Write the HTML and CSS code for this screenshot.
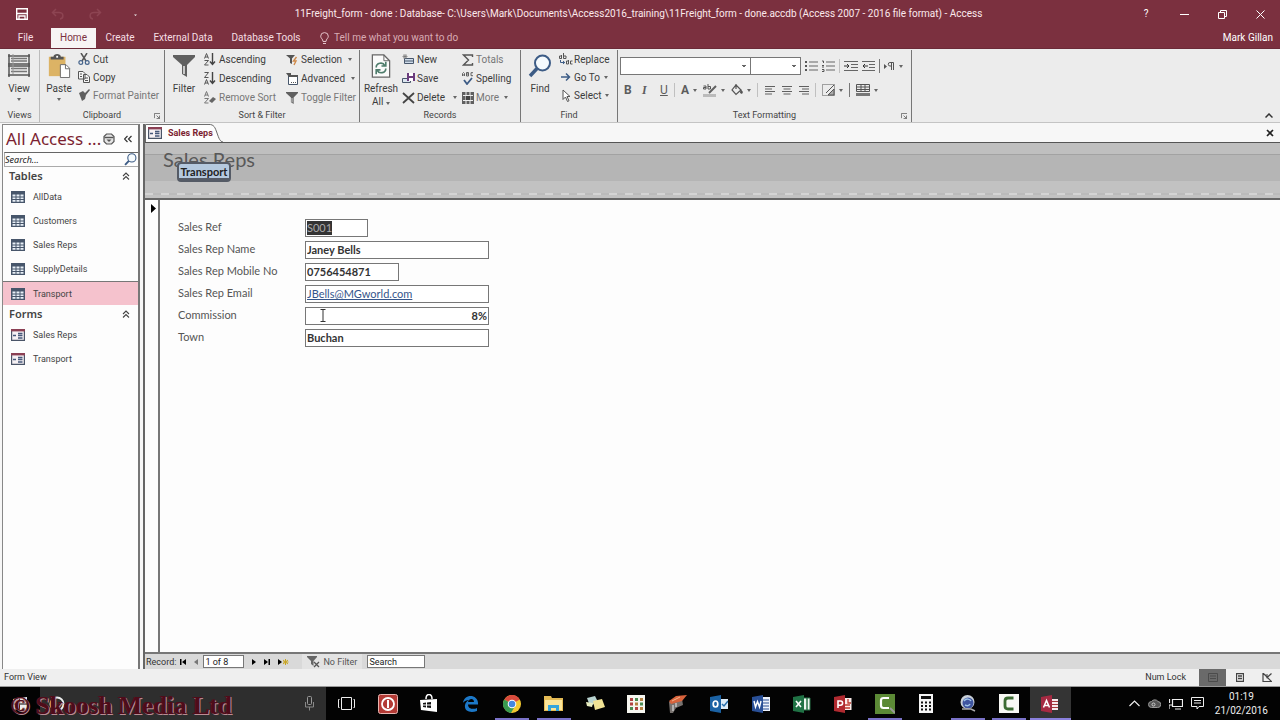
FILE: index.html
```html
<!DOCTYPE html>
<html lang="en">
<head>
<meta charset="utf-8">
<title>11Freight_form - Access</title>
<link rel="stylesheet" href="styles.css">
</head>
<body>
<svg class="defs" aria-hidden="true">
  <symbol id="table" viewBox="0 0 14 12"><path d="M0 0h14v12H0z" fill="#47566b"/><path d="M1.500 3.500h3v2h-3zM5.500 3.500h3v2h-3zM9.500 3.500h3v2h-3zM1.500 6.500h3v1.500h-3zM5.500 6.500h3v1.500h-3zM9.500 6.500h3v1.500h-3zM1.500 9h3v1.700h-3zM5.500 9h3v1.700h-3zM9.500 9h3v1.700h-3z" fill="#e8eff7"/></symbol>
  <symbol id="form" viewBox="0 0 14 12"><path d="M.6.600h12.800v10.800H.6z" fill="#f6f1f4" stroke="#4a5568" stroke-width="1.200"/><path d="M0 0h14v2.400H0z" fill="#8b4054"/><path d="M2 6.500h3M7 4.500h4.500M7 6.500h4.500M7 9h4.500" stroke="#46587a" stroke-width="1.300"/></symbol>
  <symbol id="chev" viewBox="0 0 8 8"><path d="M1 4l3-3 3 3M1 7.500l3-3 3 3" fill="none" stroke="#444" stroke-width="1.100"/></symbol>
  <symbol id="lens" viewBox="0 0 24 24"><circle cx="14.500" cy="9" r="7.500" fill="#f5fafd" stroke="#3d5c86" stroke-width="2"/><path d="M9 14.500L2 22" stroke="#3d5c86" stroke-width="3.500"/></symbol>
  <symbol id="funnel" viewBox="0 0 22 22"><path d="M0 0h22v2l-8 8v12l-5-3v-9L0 2z" fill="#606060"/><path d="M11 11v8" stroke="#eee" stroke-width="1.500"/></symbol>
  <symbol id="left" viewBox="0 0 12 10"><path d="M1 1.500h10M1 4h7M1 6.500h10M1 9h7" stroke="#606060"/></symbol>
  <symbol id="mid" viewBox="0 0 12 10"><path d="M1 1.500h10M2.500 4h7M1 6.500h10M2.500 9h7" stroke="#606060"/></symbol>
  <symbol id="right" viewBox="0 0 12 10"><path d="M1 1.500h10M4 4h7M1 6.500h10M4 9h7" stroke="#606060"/></symbol>
  <symbol id="launch" viewBox="0 0 7 7"><path d="M.5 6V.500H7M3 3l3.500 3.500M6.500 3v3.500H3" fill="none" stroke="#666"/></symbol>
</svg>

<header class="top">
  <div class="titlebar">
    <div class="quick">
      <button class="plain" aria-label="Save"><svg width="12" height="12" viewBox="0 0 12 12"><path d="M.7.700h10.600v10.600H.7z" fill="none" stroke="#fff" stroke-width="1.400"/><path d="M1 5.500h10M3 11V8h6v3" stroke="#fff" fill="none" stroke-width="1.300"/></svg></button>
      <button class="plain" aria-label="Undo"><svg width="14" height="12" viewBox="0 0 14 12"><path d="M5 1L1.500 4.500 5 8M2 4.500h6c5 0 5 6 1 6.500" fill="none" stroke="#8d4452" stroke-width="1.500"/></svg></button>
      <button class="plain" aria-label="Redo"><svg width="14" height="12" viewBox="0 0 14 12"><path d="M9 1l3.500 3.500L9 8M12 4.500H6c-5 0-5 6-1 6.500" fill="none" stroke="#8d4452" stroke-width="1.500"/></svg></button>
      <button class="plain more" aria-label="Customize"><svg width="5" height="5" viewBox="0 0 5 5"><path d="M1 .500h3M1 2.500h3L2.500 4z" fill="#eee"/></svg></button>
    </div>
    <h1 class="doc">11Freight_form - done : Database- C:\Users\Mark\Documents\Access2016_training\11Freight_form - done.accdb (Access 2007 - 2016 file format) - Access</h1>
    <div class="winbtns">
      <button class="plain" aria-label="Help">?</button>
      <button class="plain" aria-label="Minimize"><svg width="9" height="9" viewBox="0 0 9 9"><path d="M0 4.500h9" stroke="#fff"/></svg></button>
      <button class="plain" aria-label="Restore"><svg width="9" height="9" viewBox="0 0 9 9"><path d="M.5 2.500h6v6h-6zM2.500 2V.500h6v6H7" fill="none" stroke="#fff"/></svg></button>
      <button class="plain" aria-label="Close"><svg width="9" height="9" viewBox="0 0 9 9"><path d="M.5.500l8 8M8.500.500l-8 8" stroke="#fff"/></svg></button>
    </div>
  </div>
  <nav class="tabs">
    <button class="tab file">File</button>
    <button class="tab active">Home</button>
    <button class="tab create">Create</button>
    <button class="tab ext">External Data</button>
    <button class="tab db">Database Tools</button>
    <button class="tab tell"><svg width="9" height="13" viewBox="0 0 9 13"><path d="M3 9.500C3 7 .7 6.500.7 4.200a3.800 3.600 0 0 1 7.600 0C8.300 6.500 6 7 6 9.500zM3 11.500h3" fill="none" stroke="#e5c3ca"/></svg>Tell me what you want to do</button>
    <span class="user">Mark Gillan</span>
  </nav>
</header>

<section class="ribbon" aria-label="Ribbon">
  <div class="group views">
    <div class="gbody">
      <button class="big"><svg width="22" height="24" viewBox="0 0 22 24"><path d="M1 0v23M21 0v23M0 2h22M0 10h22M0 12h22M0 21h22" stroke="#555" stroke-width="1.500"/><path d="M3 4.500h16M3 7h16M3 14.500h16M3 17.500h16" stroke="#777" stroke-width="1.500"/><path d="M5 0v20" stroke="#999"/></svg><span>View</span><i class="caret"></i></button>
    </div>
    <div class="glabel">Views</div>
  </div>
  <div class="group clip">
    <div class="gbody">
      <button class="big"><svg width="24" height="26" viewBox="0 0 24 26"><path d="M1 3h18v21H1z" fill="#dcb365"/><path d="M3 6V3h3c0-4 8-4 8 0h3v3z" fill="#555"/><path d="M9 2h2v2H9z" fill="#fff"/><path d="M13.500 11.500h6l4 4v10h-10z" fill="#fff" stroke="#666"/><path d="M19 11.500v4.500h4.500" fill="none" stroke="#666"/></svg><span>Paste</span><i class="caret"></i></button>
      <div class="col">
        <button class="cmd"><svg width="12" height="12" viewBox="0 0 12 12"><path d="M3 0l5 8M9 0L4 8" stroke="#555" stroke-width="1.500"/><circle cx="2.800" cy="9.500" r="1.900" fill="none" stroke="#46648c" stroke-width="1.200"/><circle cx="9.200" cy="9.500" r="1.900" fill="none" stroke="#46648c" stroke-width="1.200"/></svg>Cut</button>
        <button class="cmd"><svg width="12" height="12" viewBox="0 0 12 12"><path d="M.5.500H5l2 2V8H.5zM5.500 3.500H9l2.500 2.500v5.500h-6z" fill="#f5f5f5" stroke="#555"/><path d="M2 3h2M2 5.500h2M7 7h3M7 9.500h3" stroke="#555"/></svg>Copy</button>
        <button class="cmd dim"><svg width="12" height="12" viewBox="0 0 12 12"><path d="M1 4l4-2 2 2 4-4 1 1-4 5-1 4-3 2z" fill="#606060"/></svg>Format Painter</button>
      </div>
    </div>
    <div class="glabel">Clipboard<button class="launch" aria-label="Clipboard options"><svg width="6" height="6"><use href="#launch"/></svg></button></div>
  </div>
  <div class="group sort">
    <div class="gbody">
      <button class="big"><svg width="22" height="24"><use href="#funnel"/></svg><span>Filter</span></button>
      <div class="col">
        <button class="cmd"><svg width="12" height="13" viewBox="0 0 12 13"><path d="M.5 5.500L2.500.500l2 5M1 4h3M.5 7.500h4l-4 4.500h4" fill="none" stroke="#555"/><path d="M8.500 0v11M6 8.500l2.500 3 2.500-3" fill="none" stroke="#444" stroke-width="1.400"/></svg>Ascending</button>
        <button class="cmd"><svg width="12" height="13" viewBox="0 0 12 13"><path d="M.5.500h4l-4 5h4M.5 12.500l2-5 2 5M1 11h3" fill="none" stroke="#555"/><path d="M8.500 0v11M6 8.500l2.500 3 2.500-3" fill="none" stroke="#444" stroke-width="1.400"/></svg>Descending</button>
        <button class="cmd dim"><svg width="12" height="13" viewBox="0 0 12 13"><path d="M.5 5.500L2.500.500l2 5M1 4h3M.5 7.500h4l-4 4.500h4" fill="none" stroke="#777"/><path d="M5 10l4-4 3 2-4 4z" fill="#666"/></svg>Remove Sort</button>
      </div>
      <div class="col second">
        <button class="cmd"><svg width="12" height="12" viewBox="0 0 12 12"><path d="M0 1h9L6 4.500V10L4 9V4.500z" fill="#555"/><path d="M10.500 3L7.500 7H10l-2 4" fill="none" stroke="#d08a4a" stroke-width="1.400"/></svg>Selection<i class="caret"></i></button>
        <button class="cmd"><svg width="12" height="12" viewBox="0 0 12 12"><path d="M2.500 2.500h9v9h-9z" fill="#fff" stroke="#47566b"/><path d="M0 0h5v2h7v2H3z" fill="#555"/><path d="M5 9.500h5" stroke="#555" stroke-dasharray="1 1"/></svg>Advanced<i class="caret"></i></button>
        <button class="cmd dim"><svg width="12" height="12" viewBox="0 0 22 22"><use href="#funnel"/></svg>Toggle Filter</button>
      </div>
    </div>
    <div class="glabel">Sort &amp; Filter</div>
  </div>
  <div class="group rec">
    <div class="gbody">
      <button class="big"><svg width="20" height="25" viewBox="0 0 20 25"><path d="M1 1h12l6 6v17H1z" fill="#fafafa" stroke="#666" stroke-width="1.300"/><path d="M13 1v6h6" fill="none" stroke="#666"/><path d="M5 14c0-5 7-6 9-2M15 8v4.500h-4.500M15 15c0 5-7 6-9 2M5 21v-4.500h4.500" fill="none" stroke="#4f7d6c" stroke-width="1.700"/></svg><span>Refresh<br>All <i class="caret"></i></span></button>
      <div class="col first">
        <button class="cmd"><svg width="13" height="12" viewBox="0 0 13 12"><path d="M2.500 4.500h9v5h-9z" fill="#cfdcea" stroke="#47566b"/><path d="M3 7h9" stroke="#47566b"/><path d="M3 0v5M.5 2.500h5M1 .700l4 3.600M5 .700L1 4.300" stroke="#777" stroke-width=".8"/></svg>New</button>
        <button class="cmd"><svg width="13" height="12" viewBox="0 0 13 12"><path d="M.5 5.500h8v4h-8z" fill="#dce6f0" stroke="#47566b"/><path d="M5 0h8v8H5z" fill="#6b3c7d"/><path d="M7 0h4v3H7zM7 5h4v3H7z" fill="#fff"/></svg>Save</button>
        <button class="cmd"><svg width="13" height="12" viewBox="0 0 13 12"><path d="M1 1l11 10M12 1L1 11" stroke="#444" stroke-width="1.800"/></svg>Delete<i class="caret wide"></i></button>
      </div>
      <div class="col third">
        <button class="cmd dim"><svg width="12" height="12" viewBox="0 0 12 12"><path d="M10.500 3V1H1.500l5 5-5 5h9V9" fill="none" stroke="#555" stroke-width="1.400"/></svg>Totals</button>
        <button class="cmd"><svg width="12" height="13" viewBox="0 0 12 13"><path d="M.5 4V1.500L1.500.500l1 1V4M.5 3h2M4.500.500v3.500h2v-3.500zM4.500 2h2M11 .700H9v3h2" fill="none" stroke="#555" stroke-width=".9"/><path d="M2 8l3 4 5-6" fill="none" stroke="#3d5c86" stroke-width="1.800"/></svg>Spelling</button>
        <button class="cmd dim"><svg width="12" height="12"><path d="M0 0h12v12H0z" fill="#606060"/><path d="M1 3.500h10M1 8.500h10M4 0v12M8 0v12" stroke="#eee"/><path d="M4 4h4v4H4z" fill="#444"/></svg>More<i class="caret"></i></button>
      </div>
    </div>
    <div class="glabel">Records</div>
  </div>
  <div class="group find">
    <div class="gbody">
      <button class="big"><svg width="24" height="24"><use href="#lens"/></svg><span>Find</span></button>
      <div class="col">
        <button class="cmd"><svg width="14" height="13" viewBox="0 0 14 13"><path d="M.5 3h2v2.500H.5zM2.500 2v3.500M4.500 0v5.500h2.500V3H4.500M7.500 8h2v3h-2zM9.500 7v4M13.500 8H11.500v3h2" fill="none" stroke="#555"/><path d="M1.500 7v2.500h4M4 8l1.700 1.500L4 11" fill="none" stroke="#3d5c86"/></svg>Replace</button>
        <button class="cmd"><svg width="14" height="10" viewBox="0 0 14 10"><path d="M2 5h8M7 1.500L10.500 5 7 8.500" fill="none" stroke="#3d5c86" stroke-width="1.500"/></svg>Go To<i class="caret"></i></button>
        <button class="cmd"><svg width="14" height="13" viewBox="0 0 14 13"><path d="M4 1v9.500l2.500-2.500 2 4.500 1.500-.7-2-4.300H11z" fill="#fff" stroke="#555"/></svg>Select<i class="caret"></i></button>
      </div>
    </div>
    <div class="glabel">Find</div>
  </div>
  <div class="group text">
    <div class="gbody fmt">
      <div class="frow">
        <select class="font" aria-label="Font"><option></option></select><select class="size" aria-label="Font size"><option></option></select>
        <button class="ib" aria-label="Bullets"><svg width="13" height="12" viewBox="0 0 13 12"><path d="M0 2h2M0 6h2M0 10h2" stroke="#555" stroke-width="2"/><path d="M4 2h9M4 6h9M4 10h9" stroke="#666"/></svg></button>
        <button class="ib" aria-label="Numbering"><svg width="13" height="12" viewBox="0 0 13 12"><path d="M0 1h1.500v2M0 5.500h2M0 7h2M0 9.500h2v2H0" stroke="#555" fill="none"/><path d="M4 2h9M4 6h9M4 10h9" stroke="#666"/></svg></button>
        <i class="sep"></i>
        <button class="ib" aria-label="Decrease indent"><svg width="14" height="10" viewBox="0 0 14 10"><path d="M0 .500h14M7 3.500h7M7 6.500h7M0 9.500h14" stroke="#666"/><path d="M0 5h5M3 3l2 2-2 2" stroke="#333" fill="none"/></svg></button>
        <button class="ib" aria-label="Increase indent"><svg width="13" height="10" viewBox="0 0 13 10"><path d="M0 .500h13M7 3.500h6M7 6.500h6M0 9.500h13" stroke="#666"/><path d="M1 5h5M3 3L1 5l2 2" stroke="#333" fill="none"/></svg></button>
        <i class="sep dark"></i>
        <button class="ib" aria-label="Direction"><svg width="11" height="9" viewBox="0 0 11 9"><path d="M0 2l3 2.500L0 7z" fill="#555"/><path d="M7.500 8V1M9.500 8V.500H6a1.500 1.500 0 0 0 0 3.500h1" fill="none" stroke="#555"/></svg><i class="caret"></i></button>
      </div>
      <div class="frow low">
        <button class="ib b">B</button><button class="ib it">I</button><button class="ib u">U</button>
        <i class="sep"></i>
        <button class="ib a">A<i class="caret"></i></button>
        <button class="ib" aria-label="Highlight"><svg width="14" height="13" viewBox="0 0 14 13"><path d="M.5 2h2.500v3H.5V3.500H3M5 0v5h2.500V2.500H5" fill="none" stroke="#555"/><path d="M13 2L6 9" stroke="#606060" stroke-width="2"/><path d="M0 10h13v3H0z" fill="#bbb"/></svg><i class="caret"></i></button>
        <button class="ib" aria-label="Fill"><svg width="12" height="12" viewBox="0 0 12 12"><path d="M5 1l5 5-5 4.500L1 6zM5 0v5" fill="none" stroke="#555" stroke-width="1.200"/><path d="M9.500 5l2.500 3-1 2-2-1z" fill="#555"/></svg><i class="caret"></i></button>
        <i class="sep"></i>
        <button class="ib al" aria-label="Align left"><svg width="12" height="10"><use href="#left"/></svg></button>
        <button class="ib al" aria-label="Center"><svg width="12" height="10"><use href="#mid"/></svg></button>
        <button class="ib al" aria-label="Align right"><svg width="12" height="10"><use href="#right"/></svg></button>
        <i class="sep"></i>
        <button class="ib" aria-label="Gridlines"><svg width="13" height="12" viewBox="0 0 13 12"><path d="M.5.500h12v11H.5z" fill="none" stroke="#555" stroke-dasharray="1 1"/><path d="M12 1L4 9M12 5v6H6z" stroke="#555" fill="#aaa"/></svg><i class="caret"></i></button>
        <i class="sep dark"></i>
        <button class="ib" aria-label="Alternate row color"><svg width="14" height="12" viewBox="0 0 14 12"><path d="M.5.500h13v7H.5zM0 3h14M0 5.500h14M5 0v8M9 0v8" fill="none" stroke="#555"/><path d="M0 9h14v3H0z" fill="#777"/></svg><i class="caret"></i></button>
      </div>
    </div>
    <div class="glabel">Text Formatting<button class="launch" aria-label="Text options"><svg width="6" height="6"><use href="#launch"/></svg></button></div>
  </div>
  <button class="collapse" aria-label="Collapse ribbon"><svg width="8" height="5" viewBox="0 0 8 5"><path d="M.5 4.500L4 1l3.500 3.500" fill="none" stroke="#333" stroke-width="1.500"/></svg></button>
</section>

<main class="work">
  <aside class="nav">
    <div class="navhead"><h2>All Access ...</h2>
      <button class="plain" aria-label="Object filter"><svg width="12" height="12" viewBox="0 0 12 12"><path d="M3.500 1h5L11 3.500v5L8.500 11h-5L1 8.500v-5z" fill="#e4e4e4" stroke="#555" stroke-width="1.200"/><path d="M1.500 4.500h9" stroke="#555" stroke-width="1.400"/><path d="M3.500 6.500h5L6 9z" fill="#555"/></svg></button>
      <button class="plain" aria-label="Collapse pane"><svg width="8" height="8" viewBox="0 0 8 8"><path d="M3.500 1l-3 3 3 3M7.500 1l-3 3 3 3" fill="none" stroke="#333" stroke-width="1.200"/></svg></button>
    </div>
    <div class="navsearch"><input type="text" placeholder="Search..." aria-label="Search objects"><svg width="13" height="13"><use href="#lens"/></svg></div>
    <h3>Tables<svg width="8" height="8"><use href="#chev"/></svg></h3>
    <ul>
      <li><svg width="14" height="12"><use href="#table"/></svg>AllData</li>
      <li><svg width="14" height="12"><use href="#table"/></svg>Customers</li>
      <li><svg width="14" height="12"><use href="#table"/></svg>Sales Reps</li>
      <li><svg width="14" height="12"><use href="#table"/></svg>SupplyDetails</li>
      <li class="sel"><svg width="14" height="12"><use href="#table"/></svg>Transport</li>
    </ul>
    <h3>Forms<svg width="8" height="8"><use href="#chev"/></svg></h3>
    <ul>
      <li><svg width="14" height="12"><use href="#form"/></svg>Sales Reps</li>
      <li><svg width="14" height="12"><use href="#form"/></svg>Transport</li>
    </ul>
  </aside>
  <section class="docarea">
    <div class="doctabs">
      <button class="doctab"><svg class="tabshape" viewBox="0 0 78 19" preserveAspectRatio="none"><path d="M.5 19V.500H64c5 0 6 3 8 9s3 9 6 9.500" fill="#fdfdfd" stroke="#666"/></svg><svg class="ico" width="14" height="12"><use href="#form"/></svg><span>Sales Reps</span></button>
      <button class="plain" aria-label="Close form"><svg width="8" height="8" viewBox="0 0 8 8"><path d="M1 1l6 6M7 1L1 7" stroke="#222" stroke-width="1.700"/></svg></button>
    </div>
    <div class="formhead"><h2>Sales Reps</h2><button class="transport">Transport</button></div>
    <div class="formbody">
      <div class="selector"><svg width="5" height="9" viewBox="0 0 5 9"><path d="M0 0l5 4.500L0 9z"/></svg></div>
      <form class="fields">
        <label for="f1">Sales Ref</label><div class="box w1"><input id="f1" class="picked" value="S001" size="4"></div>
        <label for="f2">Sales Rep Name</label><div class="box"><input id="f2" value="Janey Bells"></div>
        <label for="f3">Sales Rep Mobile No</label><div class="box w2"><input id="f3" value="0756454871"></div>
        <label for="f4">Sales Rep Email</label><div class="box"><input id="f4" class="mail" value="JBells@MGworld.com"></div>
        <label for="f5">Commission</label><div class="box"><input id="f5" class="num" value="8%"><svg class="ibeam" width="6" height="13" viewBox="0 0 6 13"><path d="M.5.500h5M3 .500v12M.5 12.500h5" stroke="#333" fill="none"/></svg></div>
        <label for="f6">Town</label><div class="box"><input id="f6" value="Buchan"></div>
      </form>
    </div>
    <div class="recnav">
      <span>Record:</span>
      <button class="plain" aria-label="First"><svg width="6" height="6" viewBox="0 0 6 6"><path d="M0 0h1.500v6H0zM6 0v6L2 3z"/></svg></button>
      <button class="plain prev" aria-label="Previous"><svg width="4" height="6" viewBox="0 0 4 6"><path d="M4 0v6L0 3z" fill="#777"/></svg></button>
      <input class="pos" value="1 of 8" aria-label="Record position">
      <button class="plain" aria-label="Next"><svg width="4" height="6" viewBox="0 0 4 6"><path d="M0 0v6l4-3z"/></svg></button>
      <button class="plain" aria-label="Last"><svg width="6" height="6" viewBox="0 0 6 6"><path d="M4.500 0H6v6H4.500zM0 0v6l4-3z"/></svg></button>
      <button class="plain" aria-label="New record"><svg width="11" height="6" viewBox="0 0 11 6"><path d="M0 0v6l4-3z"/><path d="M7.500 0v6M5 1l5 4M10 1L5 5M5 3h5.500" stroke="#c9a520"/></svg></button>
      <button class="plain nofilter"><svg width="13" height="12" viewBox="0 0 13 12"><path d="M0 0h10v1L6.500 5v5L4 8V5L0 1z" fill="#666"/><path d="M7 6l5 5M12 6l-5 5" stroke="#555" stroke-width="1.300"/></svg>No Filter</button>
      <input class="rsearch" value="Search" aria-label="Search records">
    </div>
  </section>
</main>

<footer class="status">
  <span>Form View</span>
  <span class="numlock">Num Lock</span>
  <button class="vb on" aria-label="Form view"><svg width="10" height="9" viewBox="0 0 10 9"><path d="M.5.500h9v8h-9zM2 3h6M2 5.500h6" fill="none" stroke="#4b4b4b"/></svg></button>
  <button class="vb" aria-label="Layout view"><svg width="8" height="9" viewBox="0 0 8 9"><path d="M.5.500h7v8h-7zM2 3h4M2 5.500h4" fill="none" stroke="#444" stroke-width="1.300"/></svg></button>
  <button class="vb" aria-label="Design view"><svg width="10" height="9" viewBox="0 0 10 9"><path d="M1 0v8.500h8.500zM9.500.500l-5 4.500M3 2h3" fill="none" stroke="#444" stroke-width="1.200"/></svg></button>
</footer>

<div class="taskbar">
  <button class="start" aria-label="Start"><svg width="14" height="14" viewBox="0 0 14 14"><path d="M0 2l6-1v5.500H0zM7 1l7-1v6.500H7zM0 7.500h6V13l-6-1zM7 7.500h7V14l-7-1z" fill="#eee"/></svg></button>
  <div class="cortana"><svg width="16" height="16" viewBox="0 0 16 16"><circle cx="8" cy="8" r="6.500" fill="none" stroke="#eee" stroke-width="2"/></svg>
    <svg width="9" height="15" viewBox="0 0 9 15"><rect x="2.500" y=".5" width="4" height="8" rx="1" fill="none" stroke="#999"/><path d="M.5 6v5h8V6M4.500 11v3.500" fill="none" stroke="#888"/></svg></div>
  <div class="apps">
    <button aria-label="Task view"><svg width="17" height="13" viewBox="0 0 17 13"><path d="M3.500.500h10v12h-10zM1.500 2.500H.5v8h1M15.500 2.500h1v8h-1" fill="none" stroke="#eee"/></svg></button>
    <button aria-label="Power"><svg width="20" height="20" viewBox="0 0 20 20"><rect x=".5" y=".5" width="19" height="19" rx="2" fill="#b33a35" stroke="#e8b5b0"/><circle cx="10" cy="10" r="6" fill="none" stroke="#fff" stroke-width="1.800"/><path d="M10 6v8" stroke="#fff" stroke-width="2"/></svg></button>
    <button aria-label="Store"><svg width="18" height="19" viewBox="0 0 18 19"><path d="M0 6l17-1v13L1 16z" fill="#fff"/><path d="M6 5c0-6 6-6 6 0" fill="none" stroke="#fff" stroke-width="1.500"/><path d="M3 9l3-.500v2H3zM7 8.500l4-.500v2.500H7zM3 11.500h3v2L3 13zM7 11.500h4V14l-4-.500z" fill="#111"/></svg></button>
    <button aria-label="Edge"><svg width="17" height="17" viewBox="0 0 17 17"><path d="M1 8C2-2 17-1 16 9.500H6c0 5 6 5 9 3.500v3C8 18.500 2 16 3 10c.5-3 3-5 5-5-5-.500-7 3-7 3zm5-1h6c0-4-5-4-6 0z" fill="#1c78c8"/></svg></button>
    <button class="run" aria-label="Chrome"><svg width="18" height="18" viewBox="0 0 18 18"><circle cx="9" cy="9" r="9" fill="#f2c830"/><path d="M9 9L1.200 4.500A9 9 0 0 1 16.800 4.500z" fill="#d94a3d"/><path d="M1.200 4.500A9 9 0 0 0 8 18l4-7-3-2z" fill="#399a50"/><circle cx="9" cy="9" r="4.300" fill="#fff"/><circle cx="9" cy="9" r="3.300" fill="#4387e0"/></svg></button>
    <button class="run" aria-label="File Explorer"><svg width="19" height="17" viewBox="0 0 19 17"><path d="M0 1h7l1 2h11v13H0z" fill="#e4bb55"/><path d="M1 5h17v10H1z" fill="#fbe59a"/><path d="M4 16V10h11v6h-3v-3H7v3z" fill="#35a5dd"/></svg></button>
    <button aria-label="Sticky Notes"><svg width="19" height="17" viewBox="0 0 19 17"><path d="M1 3l8-2 3 6-8 4z" fill="#b8d3d0"/><path d="M7 6l9-2 3 8-10 3z" fill="#f1e394"/><path d="M0 7l7 1-1 4-5-1z" fill="#e8edc0"/></svg></button>
    <button aria-label="Apps grid"><svg width="18" height="18" viewBox="0 0 18 18"><path d="M0 0h18v18H0z" fill="#f6f6f0"/><path d="M3 4.500h3M3 9h3M8 13.500h3" stroke="#b14242" stroke-width="3"/><path d="M8 4.500h3M13 9h3M3 13.500h3" stroke="#4a8b52" stroke-width="3"/><path d="M13 4.500h3M8 9h3M13 13.500h3" stroke="#b4803f" stroke-width="3"/></svg></button>
    <button aria-label="Media tool"><svg width="20" height="18" viewBox="0 0 20 18"><path d="M1 7l13-3 1 6-7 3-3 5H2z" fill="#77716e"/><path d="M1 6L8 1l11-1-5 6-11 3z" fill="#d8633c"/><path d="M5 10v6M8 8v4" stroke="#eee"/><path d="M4 6l8-4" stroke="#f2b38a"/></svg></button>
    <button aria-label="Outlook"><svg width="18" height="18" viewBox="0 0 18 18"><path d="M9 4h9v10H9z" fill="#dcecf8"/><path d="M12 9l2 2 4-5" stroke="#2870ae" stroke-width="1.500" fill="none"/><path d="M0 2l11-2v18L0 16z" fill="#1b62a4"/><ellipse cx="5.500" cy="9" rx="2.300" ry="3" fill="none" stroke="#fff" stroke-width="1.700"/></svg></button>
    <button aria-label="Word"><svg width="18" height="18" viewBox="0 0 18 18"><path d="M9 2h9v14H9z" fill="#eef2fb"/><path d="M11 5h6M11 8h6M11 11h6M11 14h6" stroke="#2b4f93"/><path d="M0 2l11-2v18L0 16z" fill="#294f96"/><path d="M2 6l1.500 6 2-5.500 2 5.500L9 6" fill="none" stroke="#fff" stroke-width="1.400"/></svg></button>
    <button aria-label="Excel"><svg width="18" height="18" viewBox="0 0 18 18"><path d="M10 3h7v12h-7z" fill="#eef6f0" stroke="#267346"/><path d="M14 3v12" stroke="#267346" stroke-width="1.500"/><path d="M0 2l11-2v18L0 16z" fill="#207245"/><path d="M3 6l5 6M8 6l-5 6" stroke="#fff" stroke-width="1.600"/></svg></button>
    <button aria-label="PowerPoint"><svg width="18" height="18" viewBox="0 0 18 18"><path d="M9 3h8.500v12H9z" fill="#fbecea"/><path d="M11 10h5M11 13h5M14 4v4h3" stroke="#bf3b30" stroke-width="1.300" fill="none"/><path d="M0 2l11-2v18L0 16z" fill="#b02a30"/><path d="M4 13V6h2.500a2 2 0 0 1 0 4.200H4" fill="none" stroke="#fff" stroke-width="1.600"/></svg></button>
    <button class="run" aria-label="Camtasia"><svg width="20" height="20" viewBox="0 0 20 20"><path d="M0 0h20v20H0z" fill="#5c8a36"/><path d="M14 4H8.500Q6 4 6 6.500v5Q6 14 8.500 14H14" fill="none" stroke="#fff" stroke-width="2.200"/><path d="M15 14l5 5" stroke="#999" stroke-width="2"/></svg></button>
    <button aria-label="Calculator"><svg width="14" height="19" viewBox="0 0 14 19"><path d="M0 0h14v19H0z" fill="#f5f5f5"/><path d="M2 2h10v3H2z" fill="#111"/><path d="M2 8.500h11M2 12h11M2 15.500h11" stroke="#111" stroke-width="2" stroke-dasharray="2 2"/></svg></button>
    <button class="run" aria-label="Globe search"><svg width="18" height="17" viewBox="0 0 18 17"><circle cx="8.500" cy="7" r="7" fill="#c9d0d8"/><circle cx="9" cy="8" r="5.500" fill="#3f55a0"/><path d="M5 6c2-3 6-2 7 0M6 10c2 1 4 1 5-1" stroke="#9fc4e8" stroke-width="1.500" fill="none"/><path d="M3 14h9l4 2" stroke="#aaa" stroke-width="1.500" fill="none"/></svg></button>
    <button class="run" aria-label="Camtasia recorder"><svg width="20" height="19" viewBox="0 0 20 19"><path d="M0 0h20v19H0z" fill="#f8f8f4"/><path d="M14.500 4H9Q6 4 6 7v5q0 3 3 3h5.500" fill="none" stroke="#3c6b32" stroke-width="2.800"/></svg></button>
    <button class="run current" aria-label="Access"><svg width="18" height="18" viewBox="0 0 18 18"><path d="M9 4h8v11H9z" fill="#f8e8eb"/><path d="M10 6.500h7M10 9.500h7M10 12.500h7" stroke="#a4373a"/><path d="M0 2l11-2v18L0 16z" fill="#a52a42"/><path d="M2.500 12.500L5.500 5.500l3 7M3.500 10.500h4" fill="none" stroke="#fff" stroke-width="1.500"/></svg></button>
  </div>
  <div class="tray">
    <svg width="11" height="7" viewBox="0 0 11 7"><path d="M.5 6l5-5 5 5" fill="none" stroke="#eee" stroke-width="1.200"/></svg>
    <svg width="13" height="10" viewBox="0 0 13 10"><path d="M3.500 8.500a3 3 0 0 1 0-6 4 4 0 0 1 6.500 0 3 3 0 0 1-.5 6z" fill="#555" stroke="#999"/><circle cx="5.500" cy="5.500" r="1.500" fill="none" stroke="#ccc"/></svg>
    <svg width="14" height="12" viewBox="0 0 14 12"><path d="M3.500 1.500h10v7h-10zM6 11h6M.5 1v4M0 11V7h3" fill="none" stroke="#eee" stroke-width="1.200"/></svg>
    <svg width="13" height="13" viewBox="0 0 13 13"><path d="M.5.500h12v9H8L6 12v-2.500H.5zM3 3.500h7M3 6h7" fill="none" stroke="#eee"/></svg>
    <div class="clock">01:19<br>21/02/2016</div>
  </div>
  <div class="mark">© Skoosh Media Ltd</div>
</div>
</body>
</html>
```
FILE: styles.css
```css
* { box-sizing: border-box; }
body { margin: 0; min-height: 100vh; display: flex; flex-direction: column; background: #f3f3f3; color: #333; font: 10px/16px Roboto, "Open Sans", sans-serif; }
h1, h2, h3, ul { margin: 0; padding: 0; font: inherit; list-style: none; }
button, input, select { font: inherit; color: inherit; margin: 0; padding: 0; border: 0; background: none; border-radius: 0; }
button { white-space: nowrap; }
svg { display: block; flex: none; }
.defs { position: absolute; width: 0; height: 0; }
.plain { display: flex; align-items: center; justify-content: center; }
.caret { display: inline-block; flex: none; border: 2px solid transparent; border-top: 3px solid #666; border-bottom: 0; margin-left: 4px; vertical-align: middle; }

.top { background: #7b303f; color: #fff; border-bottom: 1px solid #6b2a38; }
.titlebar { display: grid; grid-template-columns: 150px 1fr 153px; height: 28px; align-items: center; }
.quick { display: flex; align-items: center; padding-left: 16px; gap: 23px; }
.more { margin-left: 8px; }
.doc { text-align: center; white-space: nowrap; color: #fbe9ec; }
.winbtns { display: grid; grid-template-columns: repeat(4, 1fr); padding-right: 1px; }
.tabs { display: flex; height: 20px; align-items: stretch; padding-right: 7px; line-height: 20px; }
.tab { color: #f5dfe3; text-align: center; display: flex; align-items: center; justify-content: center; }
.file { width: 51px; }
.tabs .active { width: 45px; background: #f7f4f4; color: #7b303f; }
.create { width: 48px; }
.ext { width: 78px; }
.db { width: 88px; }
.tabs .tell { color: #d8abb4; gap: 5px; margin-left: 10px; }
.user { margin-left: auto; }

.ribbon { display: flex; background: #ececec; border-bottom: 1px solid #c4c4c4; height: 74px; position: relative; padding-top: 1px; }
.group { display: flex; flex-direction: column; border-right: 1px solid #777; height: 72px; }
.gbody { display: flex; flex: 1; align-items: flex-start; padding-left: 6px; }
.glabel { text-align: center; font-size: 9px; line-height: 14px; position: relative; color: #444; }
.launch { position: absolute; right: 4px; top: 5px; }
.views { width: 40px; border-color: #bbb; }
.clip { width: 125px; }
.sort { width: 195px; }
.rec { width: 161px; }
.find { width: 97px; }
.text { width: 294px; }
.big { display: flex; flex-direction: column; align-items: center; line-height: 13px; padding-top: 4px; width: 26px; color: #3c3c3c; }
.big svg { margin-bottom: 4px; height: 24px; }
.big .caret { margin: 3px 0 0; }
.rec .big { width: 30px; }
.col { display: flex; flex-direction: column; align-items: flex-start; margin-left: 6px; }
.sort .col { margin-left: 7px; }
.sort .second { margin-left: 10px; }
.rec .first { width: 54px; }
.cmd { display: flex; align-items: center; gap: 3px; height: 19px; line-height: 19px; color: #3c3c3c; }
.clip .cmd, .find .cmd { height: 18px; }
.find .cmd { gap: 1px; }
.rec .cmd { gap: 2px; }
.cmd .caret { margin-left: 3px; }
.cmd .wide { margin-left: 6px; }
.dim { color: #777; }
.fmt { flex-direction: column; padding: 7px 2px 0 2px; gap: 6px; }
.frow { display: flex; align-items: center; height: 18px; gap: 4px; }
.frow select { appearance: none; height: 18px; border: 1px solid #777; background: linear-gradient(45deg, transparent 50%, #666 50%) calc(100% - 6px) 7px / 2px 3px no-repeat, linear-gradient(-45deg, transparent 50%, #666 50%) calc(100% - 4px) 7px / 2px 3px no-repeat, #fff; }
.font { width: 131px; }
.size { width: 51px; margin-left: -5px; }
.ib { display: flex; align-items: center; color: #5c5c5c; font-size: 12px; }
.low { gap: 6px; padding-left: 4px; }
.b { font-weight: bold; width: 12px; }
.it { font: italic bold 12px "Liberation Serif", serif; width: 12px; }
.u { text-decoration: underline; width: 8px; }
.a { font-weight: bold; }
.ib .caret { margin-left: 4px; }
.al { margin-right: -1px; }
.sep { width: 1px; height: 14px; background: #c0c0c0; }
.dark { background: #777; }
.collapse { position: absolute; right: 7px; bottom: 4px; }

.work { flex: 1; display: flex; background: #f7f7f7; padding: 1px 0 0 2px; }
.nav { width: 138px; background: #fdfdfd; border: 1px solid #888; border-bottom: 0; border-right: 2px solid #777; margin-right: 3px; }
.navhead { display: flex; align-items: center; height: 27px; padding: 0 6px 0 3px; gap: 9px; }
.navhead h2 { font: 17px/26px "Noto Sans", sans-serif; color: #7b1f30; flex: 1; min-width: 0; white-space: nowrap; }
.navsearch { display: flex; align-items: center; height: 15px; margin: 0 0 0 1px; border: 1px solid #aaa; border-top-color: #666; border-right: 0; padding-right: 1px; }
.navsearch input { flex: 1; min-width: 0; font: italic 9px/12px "Noto Sans", sans-serif; }
.navsearch input::placeholder { color: #222; opacity: 1; }
.nav h3 { display: flex; align-items: center; justify-content: space-between; font: 600 11px/18px "Noto Sans", sans-serif; height: 18px; padding: 0 8px 0 6px; color: #444; }
.nav li { display: flex; align-items: center; gap: 8px; height: 24px; padding-left: 8px; font-size: 9px; color: #444; }
.nav .sel { background: #f5c2cd; border-top: 1px solid #777; }

.docarea { flex: 1; min-width: 0; display: flex; flex-direction: column; border-left: 2px solid #666; }
.doctabs { display: flex; justify-content: space-between; height: 19px; border-bottom: 1px solid #555; padding-right: 6px; }
.doctab { position: relative; display: flex; align-items: center; width: 78px; padding-left: 3px; gap: 6px; color: #7b1f30; font-weight: bold; font-size: 9px; }
.tabshape { position: absolute; left: 0; top: 0; width: 100%; height: 100%; }
.ico, .doctab span { position: relative; }
.formhead { height: 57px; position: relative; padding-left: 18px; border-bottom: 2px solid #666; background: linear-gradient(#bfbfbf 11px, #a2a2a2 11px 12px, #b5b5b5 12px 38px, #c2c2c2 38px); }
.formhead::after { content: ""; position: absolute; left: 0; right: 0; bottom: 3px; height: 2px; background: repeating-linear-gradient(90deg, #d4d4d4 0 8px, #bbb 8px 16px); }
.formhead h2 { font: 20px/32px Lato, sans-serif; color: #595959; }
.transport { position: absolute; left: 32px; top: 19px; width: 54px; height: 20px; border: 2px solid #555b66; border-bottom-width: 4px; border-radius: 4px; background: #b5c9de; font: bold 11px/13px Lato, sans-serif; color: #222; }
.formbody { flex: 1; display: flex; background: #fdfdfd; }
.selector { width: 15px; border-right: 2px solid #777; padding: 4px 0 0 6px; }
.fields { flex: 1; display: grid; grid-template-columns: 127px 184px; grid-auto-rows: 18px; row-gap: 4px; align-content: start; padding: 19px 0 0 18px; font: 11px/16px Lato, sans-serif; color: #555; }
.box { display: flex; align-items: center; border: 1px solid #777; padding: 0 1px; background: #fff; position: relative; font-weight: bold; color: #333; }
.box input { width: 100%; min-width: 0; height: 14px; }
.w1 { width: 63px; }
.w2 { width: 94px; }
.box .picked { width: 25px; background: #333; color: #aaa; font-weight: normal; }
.box .mail { color: #34558b; text-decoration: underline; font-weight: normal; }
.box .num { text-align: right; }
.ibeam { position: absolute; left: 14px; top: 1px; }
.recnav { display: flex; align-items: center; height: 17px; border-top: 2px solid #777; background: #d9d9d9; font-size: 9px; padding-left: 1px; gap: 8px; }
.recnav > span { margin-right: -4px; }
.prev { margin-right: -3px; }
.pos { width: 41px; height: 13px; background: #fff; border: 1px solid #777; padding-left: 1px; }
.nofilter { background: #e3e3e3; width: 60px; gap: 3px; margin-left: 5px; color: #555; }
.rsearch { width: 58px; height: 13px; background: #fff; border: 1px solid #777; padding-left: 1px; margin-left: -3px; }
.recnav input { color: #222; }

.status { display: flex; align-items: stretch; height: 18px; background: #efefef; font-size: 9px; line-height: 17px; padding-left: 4px; border-bottom: 1px solid #999; }
.numlock { margin-left: auto; margin-right: 13px; }
.vb { width: 27px; display: flex; align-items: center; justify-content: center; }
.on { background: #6a6a6a; }

.taskbar { display: flex; height: 33px; background: #030303; position: relative; color: #eee; overflow: hidden; }
.start { width: 40px; display: flex; align-items: center; justify-content: center; }
.cortana { width: 286px; background: #2e2e2e; display: flex; align-items: center; justify-content: space-between; padding: 0 12px 0 9px; }
.apps { width: 745px; display: flex; }
.apps button { flex: 1; display: flex; align-items: center; justify-content: center; }
.run { background: linear-gradient(#7a72c8, #7a72c8) center bottom / 34px 2px no-repeat; }
.apps .current { background: linear-gradient(#8a80dd, #8a80dd) center bottom / 100% 2px no-repeat, #343434; }
.tray { margin-left: auto; display: flex; align-items: center; gap: 8px; padding-right: 12px; }
.clock { text-align: center; line-height: 14px; margin-left: 3px; }
.mark { position: absolute; left: 11px; top: 5px; font: bold 25px/28px "Liberation Serif", serif; color: #4e0c1a; text-shadow: 1px 1px 0 #b98d94, -1px 0 0 #5a1523; white-space: nowrap; }
```
